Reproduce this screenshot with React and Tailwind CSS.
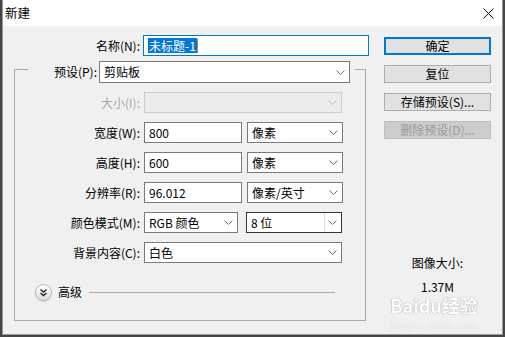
const Chevron = ({ color = '#6d6d6d' }) => (
  <svg width="9" height="5" viewBox="0 0 9 5">
    <path d="M0.5 0.5L4.5 4.5L8.5 0.5" fill="none" stroke={color} />
  </svg>
)

function Select({ value, w, border = 'border-[#7a7a7a]', bg = 'bg-white', divider = false, h = 'h-[21px]', chevron }) {
  return (
    <div className={`${w} ${h} ${bg} border ${border} flex items-center`}>
      <span className="flex-1 pl-[4px] text-black">{value}</span>
      {divider && <div className="w-px self-stretch bg-[#dcdcdc]" />}
      <div className="w-[16px] flex items-center justify-center pr-[1px]">
        <Chevron color={chevron} />
      </div>
    </div>
  )
}

function Input({ value, w }) {
  return (
    <div className={`${w} h-[21px] bg-white border border-[#7a7a7a] flex items-center pl-[4px]`}>
      {value}
    </div>
  )
}

function Row({ label, disabled, children }) {
  return (
    <div className="flex items-center h-[21px]">
      <div className={`w-[125px] text-right ${disabled ? 'text-[#a7a7a7]' : 'text-black'}`}>{label}</div>
      <div className="ml-[4px] flex items-center">{children}</div>
    </div>
  )
}

function Btn({ children, primary, disabled }) {
  const cls = primary
    ? 'border-2 border-[#0078d7] bg-[#e1e1e1] text-black'
    : disabled
      ? 'border border-[#bfbfbf] bg-[#cccccc] text-[#9a9a9a]'
      : 'border border-[#adadad] bg-[#e1e1e1] text-black'
  return (
    <div className={`h-[18px] w-[107px] flex items-center justify-center ${cls}`}>{children}</div>
  )
}

export default function App() {
  return (
    <div className="w-[505px] h-[337px] bg-[#454545] overflow-hidden font-['Noto_Sans_CJK_SC','Microsoft_YaHei',sans-serif] text-[12px] leading-none">
      <div className="ml-[2px] w-[501px] h-[335px] border-x border-b border-[#9a9a9a] flex flex-col">
        {/* title bar */}
        <div className="h-[26px] bg-white flex items-center justify-between pl-[2px] pr-[8px]">
          <span className="text-[12.5px] text-black">新建</span>
          <svg width="11" height="11" viewBox="0 0 11 11">
            <path d="M0.5 0.5L10.5 10.5M10.5 0.5L0.5 10.5" stroke="#111" strokeWidth="1" />
          </svg>
        </div>

        {/* body */}
        <div className="relative flex-1 bg-[#f0f0f0] flex pl-[11px]">
          {/* left column */}
          <div className="w-[356px] flex flex-col">
            <div className="mt-[9px] flex items-center h-[21px]">
              <div className="w-[126px] text-right text-black">名称(N):</div>
              <div className="ml-[3px] w-[226px] h-[21px] bg-white border border-[#0078d7] flex items-center pl-[4px]">
                <span className="bg-[#0078d7] text-white h-[15px] flex items-center px-[1px]">未标题-1</span>
                <span className="w-px h-[14px] bg-[#e0701f]" />
              </div>
            </div>

            <div className="mt-[13px] w-[352px] h-[252px] border border-[#a9a9a9] flex flex-col gap-[9px]">
              <div className="-mt-[9px] ml-[13px] self-start bg-[#f0f0f0] pl-[2px] pr-[5px] flex items-center h-[22px]">
                <div className="w-[67px] text-right text-black">预设(P):</div>
                <div className="ml-[2px]">
                  <Select value="剪贴板" w="w-[251px]" h="h-[22px]" />
                </div>
              </div>

              <Row label="大小(I):" disabled>
                <Select value="" w="w-[198px]" border="border-[#cccccc]" bg="bg-[#ebebeb]" chevron="#bcbcbc" />
              </Row>
              <Row label="宽度(W):">
                <Input value="800" w="w-[98px]" />
                <div className="ml-[5px]"><Select value="像素" w="w-[96px]" /></div>
              </Row>
              <Row label="高度(H):">
                <Input value="600" w="w-[98px]" />
                <div className="ml-[5px]"><Select value="像素" w="w-[96px]" /></div>
              </Row>
              <Row label="分辨率(R):">
                <Input value="96.012" w="w-[98px]" />
                <div className="ml-[5px]"><Select value="像素/英寸" w="w-[96px]" /></div>
              </Row>
              <Row label="颜色模式(M):">
                <Select value="RGB 颜色" w="w-[94px]" />
                <div className="ml-[8px]"><Select value="8 位" w="w-[96px]" border="border-[#333333]" divider /></div>
              </Row>
              <Row label="背景内容(C):">
                <Select value="白色" w="w-[198px]" />
              </Row>

              <div className="mt-[11px] ml-[20px] flex items-center h-[18px]">
                <div className="w-[17px] h-[17px] rounded-full border border-[#b5b5b5] bg-gradient-to-b from-white to-[#dedede] shadow-[0_1px_1px_rgba(0,0,0,0.15)] flex items-center justify-center">
                  <svg width="9" height="9" viewBox="0 0 9 9">
                    <path d="M1.5 1.5L4.5 4L7.5 1.5M1.5 5L4.5 7.5L7.5 5" fill="none" stroke="#222" strokeWidth="1.4" />
                  </svg>
                </div>
                <span className="ml-[6px] text-black">高级</span>
                <div className="ml-[7px] w-[246px] h-px bg-[#a9a9a9]" />
              </div>
            </div>
          </div>

          {/* right column */}
          <div className="ml-[14px] w-[107px] flex flex-col">
            <div className="mt-[11px] flex flex-col gap-[10px]">
              <Btn primary>确定</Btn>
              <Btn>复位</Btn>
              <Btn>存储预设(S)...</Btn>
              <Btn disabled>删除预设(D)...</Btn>
            </div>
            <div className="mt-[118px] text-center text-black">图像大小:</div>
            <div className="mt-[12px] text-center text-black">1.37M</div>
          </div>

          {/* watermark */}
          <div className="absolute left-[383px] top-[270px] w-[96px] flex flex-col items-center text-white pointer-events-none opacity-90 whitespace-nowrap">
            <span className="text-[18px] font-bold [text-shadow:0_0_1px_#a0a0a0,0_0_1px_#a0a0a0]">Baidu经验</span>
            <span className="mt-[7px] text-[9px] tracking-[0.5px] text-[#fafafa] [text-shadow:0_0_1px_#c0c0c0]">jingyan.baidu.com</span>
          </div>
        </div>
      </div>
    </div>
  )
}
